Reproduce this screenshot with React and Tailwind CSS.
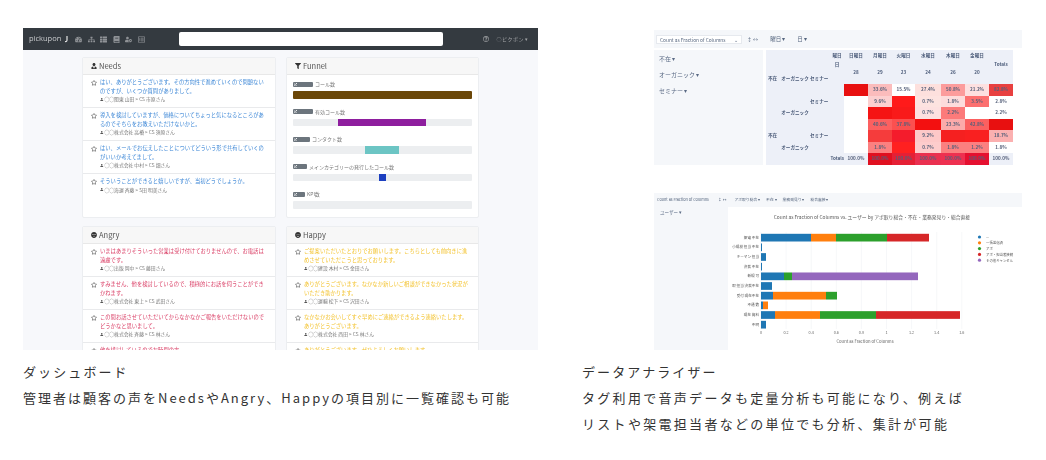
import { Star } from 'lucide-react';
import {
  FaUser, FaUserTie, FaFilter, FaAngry, FaSmile, FaTachometerAlt, FaSitemap, FaThList, FaBook,
  FaUserCog, FaRegListAlt, FaRegQuestionCircle, FaExternalLinkAlt,
} from 'react-icons/fa';

const jp = '[font-family:"Noto_Sans_CJK_JP","Noto_Sans",sans-serif]';

const needs = [
  ['はい、ありがとうございます。その方向性で進めていくので問題ないのですが、いくつか質問がありまして。', '◯◯関東 山田 > CS 市原さん'],
  ['導入を検討していますが、価格についてちょっと気になるところがあるのでそちらをお教えいただけないかと。', '◯◯株式会社 高橋 > CS 須原さん'],
  ['はい、メールでお伝えしたことについてどういう形で共有していくのがいいか考えてまして。', '◯◯株式会社 中村 > CS 畑さん'],
  ['そういうことができると嬉しいですが、当初どうでしょうか。', '◯◯海運 斉藤 > S田 明美さん'],
];
const angry = [
  ['いまはあまりそういった営業は受け付けておりませんので、お電話は遠慮です。', '◯◯出版 岡中 > CS 藤田さん'],
  ['すみません、他を検討しているので、積極的にお話を伺うことができかねます。', '◯◯株式会社 東上 > CS 武田さん'],
  ['この間お話させていただいてからなかなかご報告をいただけないのでどうかなと思いまして。', '◯◯株式会社 斉藤 > CS 林さん'],
  ['他を検討しているのでお時間の方', ''],
];
const happy = [
  ['ご提案いただいたとおりでお願いします。こちらとしても前向きに進めさせていただこうと思っております。', '◯◯建設 木村 > CS 金田さん'],
  ['ありがとうございます。なかなか新しいご相談ができなかった状況がいただき助かります。', '◯◯運輸 松下 > CS 沢田さん'],
  ['なかなかお会いしてすぐ早めにご連絡ができるよう連絡いたします。ありがとうございます。', '◯◯株式会社 西田 > CS 林さん'],
  ['ありがとうございます。ぜひよろしくお願いします。', ''],
];

const funnel = [
  { label: 'コール数', badge: 'w-[20px]', left: 0, width: 100, color: 'bg-[#6b4708]' },
  { label: '有効コール数', badge: 'w-[20px]', left: 25.4, width: 49, color: 'bg-[#8e1e9e]' },
  { label: 'コンタクト数', badge: 'w-[17px]', left: 40.4, width: 19, color: 'bg-[#6cc5c4]' },
  { label: 'メインカテゴリーの発行したコール数', badge: 'w-[14px]', left: 48, width: 3.7, color: 'bg-[#1c3fc0]' },
  { label: 'KPI数', badge: 'w-[12px]', left: 0, width: 0, color: '' },
];

const heatHeaders = ['日曜日', '月曜日', '火曜日', '水曜日', '木曜日', '金曜日'];
const heatDays = ['28', '29', '23', '24', '26', '20'];

const heatRows = [
  {
    labels: ['', '', ''],
    cells: [
      ['', 'bg-[#e81010]'], ['33.6%', 'bg-[#fbbcbc]'], ['15.5%', 'bg-white'], ['27.4%', 'bg-[#fde0dd]'],
      ['50.8%', 'bg-[#fc9c9c]'], ['21.2%', 'bg-[#fde0e0]'], ['82.8%', 'bg-[#e84040]'],
    ],
  },
  {
    labels: ['', '', 'セミナー'],
    cells: [
      ['', 'bg-white'], ['9.6%', 'bg-[#fcd0d0]'], ['', 'bg-[#ff1a1a]'], ['0.7%', 'bg-[#fde3e0]'],
      ['1.8%', 'bg-[#fddcdc]'], ['3.5%', 'bg-[#fc7070]'], ['2.8%', 'bg-white', true],
    ],
  },
  {
    labels: ['', 'オーガニック', ''],
    cells: [
      ['', 'bg-white'], ['', 'bg-[#f51414]'], ['', 'bg-[#f91a1a]'], ['0.7%', 'bg-[#fde0e0]'],
      ['2.2%', 'bg-[#fc7a7a]'], ['', 'bg-white'], ['2.2%', 'bg-white', true],
    ],
  },
  {
    labels: ['', '', ''],
    cells: [
      ['', 'bg-white'], ['40.6%', 'bg-[#fc6060]'], ['37.8%', 'bg-[#fb5050]'], ['', 'bg-[#f31010]'],
      ['23.3%', 'bg-[#fcaaaa]'], ['42.8%', 'bg-[#fb6060]'], ['', 'bg-[#e81010]'],
    ],
  },
  {
    labels: ['不在', '', 'セミナー'],
    cells: [
      ['', 'bg-white'], ['', 'bg-[#f53c3c]'], ['', 'bg-[#f41c2c]'], ['9.2%', 'bg-[#fdc8c8]'],
      ['', 'bg-[#f52020]'], ['', 'bg-[#f92020]'], ['18.7%', 'bg-[#fbb0b0]', true],
    ],
  },
  {
    labels: ['', 'オーガニック', ''],
    cells: [
      ['', 'bg-white'], ['1.8%', 'bg-[#fc8080]'], ['', 'bg-[#ff2020]'], ['0.7%', 'bg-[#fdcccc]'],
      ['1.8%', 'bg-[#fb8080]'], ['1.2%', 'bg-[#fb8080]'], ['1.8%', 'bg-white', true],
    ],
  },
];

const totals = [
  ['100.0%', ''], ['100.0%', 'bg-[#e01020]'], ['100.0%', 'bg-[#e52035]'], ['100.0%', 'bg-[#ea3050]'],
  ['100.0%', 'bg-[#ee3050]'], ['100.0%', 'bg-[#e51030]'], ['100.0%', ''],
];

const BLUE = '#1f77b4';
const ORANGE = '#ff7f0e';
const GREEN = '#2ca02c';
const RED = '#d62728';
const PURPLE = '#9467bd';

// x は描画座標そのまま（色, 終端）
const bars = [
  ['架電 不在', [[BLUE, 811], [ORANGE, 836], [GREEN, 887], [RED, 929]]],
  ['小規模 担当 不在', [[BLUE, 762]]],
  ['キーマン 担当', [[BLUE, 766]]],
  ['決裁 不在', [[BLUE, 762]]],
  ['新規 可', [[BLUE, 784], [GREEN, 792], [PURPLE, 918]]],
  ['取 担当 決裁不在', [[BLUE, 772]]],
  ['受付 現在不在', [[BLUE, 773], [ORANGE, 826], [GREEN, 837]]],
  ['不通 数', [[BLUE, 763], [ORANGE, 768]]],
  ['現在 資料', [[BLUE, 775], [ORANGE, 820], [GREEN, 876], [RED, 960]]],
  ['不明', [[BLUE, 766]]],
];

const legend = [[BLUE, '—'], [ORANGE, '一括送信済'], [GREEN, 'アポ'], [RED, 'アポ・担当者接続'], [PURPLE, 'その他キャンセル']];
const ticks = ['0', '0.2', '0.4', '0.6', '0.8', '1', '1.2', '1.4', '1.6'];

function Card({ icon, title, children, className }) {
  return (
    <div className={`bg-white border border-[#eceef1] rounded-[2px] overflow-hidden ${className}`}>
      <div className="h-[17px] bg-[#f7f7f7] border-b border-[#e8e8e8] flex items-center gap-[2px] pl-[8px] text-[7.5px] text-[#555]">
        {icon}
        <span>{title}</span>
      </div>
      {children}
    </div>
  );
}

function VoiceList({ items, color }) {
  return items.map(([text, meta]) => (
    <div key={text} className="flex gap-[3px] pl-[8px] pr-[7px] pt-[3px] h-[33px] border-b border-[#e9eaec] last:border-0">
      <Star size={6} strokeWidth={2.5} className="text-[#555] mt-[2px] shrink-0" />
      <div className="w-[171px]">
        <p className={`text-[5.3px] leading-[8.7px] ${color}`}>{text}</p>
        {meta && (
          <p className="flex items-center gap-[1px] text-[4.8px] leading-[8px] text-[#777]">
            <FaUser size={3.5} className="text-[#555]" />
            {meta}
          </p>
        )}
      </div>
    </div>
  ));
}

function Dashboard() {
  const navIcons = [FaTachometerAlt, FaSitemap, FaThList, FaBook, FaUserCog, FaRegListAlt];
  return (
    <div className="w-[515px] h-[322px] overflow-hidden bg-[#f7f8fb] blur-[0.5px]">
      <div className="h-[22px] bg-[#343a40] flex items-center pl-[6px] pr-[9px] text-[#c9cbcd]">
        <span className="text-[7.5px] w-[38px] [font-family:'Open_Sans',sans-serif]">pickupon</span>
        <svg width="4" height="8" viewBox="0 0 4 8" className="-ml-[3px]">
          <path d="M3 1 V5 Q3 7 1 6.5" fill="none" stroke="#e4e4e4" strokeWidth="1.2" />
        </svg>
        <div className="flex gap-[5.5px] ml-[7px] text-[#8f9296]">
          {navIcons.map((Icon, i) => <Icon key={i} size={7} />)}
        </div>
        <div className="w-[264px] h-[14px] bg-white rounded-[2px] ml-[34px]" />
        <div className="ml-auto flex items-center gap-[7px] text-[5px] tracking-[0.5px] text-[#a4a6a8]">
          <FaRegQuestionCircle size={6} />
          <span>○ピクポン ▾</span>
        </div>
      </div>

      <div className="pl-[59px] pt-[7px] grid grid-cols-[194px_193px] gap-x-[10px] gap-y-[8px]">
        <Card title="Needs" icon={<FaUserTie size={6} className="text-[#333]" />} className="h-[161px]">
          <VoiceList items={needs} color="text-[#3b86d6]" />
        </Card>
        <Card title="Funnel" icon={<FaFilter size={6} className="text-[#333]" />} className="h-[161px]">
          <div className="px-[6px] pt-[2px] flex flex-col gap-[6px]">
            {funnel.map((row) => (
              <div key={row.label}>
                <div className="h-[14px] flex items-center gap-[2px] text-[5px] text-[#777]">
                  <span className={`${row.badge} h-[5px] bg-[#6c757d] rounded-[1px] flex items-center pl-[1px] text-white`}>
                    <FaExternalLinkAlt size={3} />
                  </span>
                  {row.label}
                </div>
                <div className="h-[7.5px] bg-[#eceef0] rounded-[1px] overflow-hidden">
                  <div className={`h-full ${row.color}`} style={{ marginLeft: `${row.left}%`, width: `${row.width}%` }} />
                </div>
              </div>
            ))}
          </div>
        </Card>
        <Card title="Angry" icon={<FaAngry size={6} className="text-[#333]" />} className="h-[140px]">
          <VoiceList items={angry} color="text-[#d93a62]" />
        </Card>
        <Card title="Happy" icon={<FaSmile size={6} className="text-[#333]" />} className="h-[140px]">
          <VoiceList items={happy} color="text-[#f3c22c]" />
        </Card>
      </div>
    </div>
  );
}

function HeatTable() {
  const cellText = 'flex items-center justify-center text-[4.6px] font-bold text-[#55607a]';
  return (
    <div className="w-[247px] h-[115px] bg-[#edf0f8] grid grid-cols-[14px_30px_20px_14px_24px_24px_23px_26px_24px_24px_24px] grid-rows-[10px_8px_9px_7px_repeat(7,11.5px)] text-[#4a5a78] text-[4.6px] font-bold">
      <div className="col-start-4 flex items-center justify-center">曜日</div>
      {heatHeaders.map((h) => <div key={h} className="flex items-center justify-center">{h}</div>)}
      <div />

      <div className="col-start-4 flex items-center justify-center">日</div>
      <div className="col-span-6" />
      <div className="flex items-center justify-center">Totals</div>

      <div className="row-span-2 pt-[4px] flex items-center pl-[2px]">不在</div>
      <div className="row-span-2 pt-[4px] flex items-center justify-center">オーガニック</div>
      <div className="row-span-2 pt-[4px] flex items-center">セミナー</div>
      <div />
      {heatDays.map((d, i) => <div key={i} className="flex items-center justify-center">{d}</div>)}
      <div />
      <div className="col-start-4 col-span-8" />

      {heatRows.map((row, r) => (
        <div key={r} className="contents">
          <div className="flex items-center pl-[2px]">{row.labels[0]}</div>
          <div className="flex items-center justify-center">{row.labels[1]}</div>
          <div className="flex items-center">{row.labels[2]}</div>
          <div />
          {row.cells.map(([v, bg, strong], c) => (
            <div key={c} className={`${cellText} ${bg} ${strong ? 'text-[#333]' : ''}`}>{v}</div>
          ))}
        </div>
      ))}

      <div className="col-span-3" />
      <div className="flex items-center justify-end">Totals</div>
      {totals.map(([v, bg], c) => (
        <div key={c} className={`${cellText} ${bg} ${bg ? 'text-[#7a2a44]' : 'text-[#444]'}`}>{v}</div>
      ))}
    </div>
  );
}

function BarChart() {
  const ox = 728;
  const oy = 207;
  return (
    <svg width="294" height="143" viewBox={`${ox} ${oy} 294 143`} className="block">
      <text x="872" y="219" textAnchor="middle" fontSize="4.8" fill="#555">
        Count as Fraction of Columns vs. ユーザー by アポ取り総合・不在・業務発見り・総合直接
      </text>
      {ticks.map((t, i) => (
        <g key={t}>
          <line x1={761 + i * 25.1} x2={761 + i * 25.1} y1="232" y2="329" stroke="#f0f2f5" strokeWidth="0.6" />
          <text x={761 + i * 25.1} y="334" textAnchor="middle" fontSize="3.8" fill="#666">{t}</text>
        </g>
      ))}
      {bars.map(([label, segs], i) => {
        const y = 233.8 + i * 9.67;
        let x = 761;
        return (
          <g key={label}>
            <text x="759" y={y + 5} textAnchor="end" fontSize="3.6" fill="#555">{label}</text>
            {segs.map(([color, end]) => {
              const rect = <rect key={color} x={x} y={y} width={end - x} height="7.7" fill={color} />;
              x = end;
              return rect;
            })}
          </g>
        );
      })}
      {legend.map(([color, label], i) => (
        <g key={label}>
          <circle cx="979.5" cy={237 + i * 5.8} r="1.6" fill={color} />
          <text x="986" y={238.3 + i * 5.8} fontSize="3.4" fill="#555">{label}</text>
        </g>
      ))}
      <text x="865" y="343" textAnchor="middle" fontSize="4.2" fill="#666">Count as Fraction of Columns</text>
    </svg>
  );
}

function Analyzer() {
  return (
    <div className="h-[322px] flex flex-col blur-[0.5px]">
      <div className="h-[137px] pt-[2px]">
        <div className="h-[18px] bg-[#f5f7fa] flex items-center pl-[2px] text-[#55657e]">
          <div className="w-[86px] h-[9px] bg-white border border-[#e6e9ee] text-[4.8px] leading-[8px] pl-[3px] flex justify-between pr-[3px]">
            <span>Count as Fraction of Columns</span><span>⌄</span>
          </div>
          <span className="text-[5px] ml-[5px]">↕ ↔</span>
          <span className="text-[5.5px] ml-[12px]">曜日 ▾</span>
          <span className="text-[5.5px] ml-[12px]">日 ▾</span>
        </div>
        <div className="flex gap-[3px] pt-[2px]">
          <div className="w-[109px] h-[115px] bg-[#f5f7fa] flex flex-col items-start pl-[5px] pt-[4px] gap-[6px] text-[6px] text-[#5a6a84]">
            <span className="h-[10px] leading-[10px]">不在 ▾</span>
            <span className="h-[10px] leading-[10px]">オーガニック ▾</span>
            <span className="h-[10px] leading-[10px]">セミナー ▾</span>
          </div>
          <HeatTable />
        </div>
      </div>

      <div className="mt-[28px] h-[14px] bg-[#f5f7fa] flex items-center pl-[3px] text-[3.8px] text-[#55657e] gap-[6px]">
        <span className="w-[55px]">Count as Fraction of Columns</span>
        <span>↕ ↔</span>
        <span className="ml-[2px]">アポ取り総合 ▾</span>
        <span>不在 ▾</span>
        <span>業務発見り ▾</span>
        <span>総合直接 ▾</span>
      </div>
      <div className="flex h-[143px]">
        <div className="w-[74px] bg-[#f5f7fa] pl-[6px] pt-[2px] text-[4.5px] text-[#5a6a84]">ユーザー ▾</div>
        <BarChart />
      </div>
    </div>
  );
}

function Caption({ title, lines, tracking }) {
  return (
    <div className="mt-[9px] text-[13px] leading-[26px] tracking-[2.1px] text-[#333]">
      <p>{title}</p>
      {lines.map((l) => <p key={l} className={tracking}>{l}</p>)}
    </div>
  );
}

export default function App() {
  return (
    <div className={`w-[1046px] h-[460px] bg-white overflow-hidden pt-[28px] flex ${jp}`}>
      <div className="ml-[23px] w-[515px] shrink-0">
        <Dashboard />
        <Caption
          title="ダッシュボード"
          tracking="tracking-[2px]"
          lines={['管理者は顧客の声をNeedsやAngry、Happyの項目別に一覧確認も可能']}
        />
      </div>
      <div className="ml-[44px] w-[440px] shrink-0">
        <div className="ml-[72px] w-[368px]">
          <Analyzer />
        </div>
        <Caption
          title="データアナライザー"
          tracking="tracking-[2.3px]"
          lines={['タグ利用で音声データも定量分析も可能になり、例えば', 'リストや架電担当者などの単位でも分析、集計が可能']}
        />
      </div>
    </div>
  );
}
